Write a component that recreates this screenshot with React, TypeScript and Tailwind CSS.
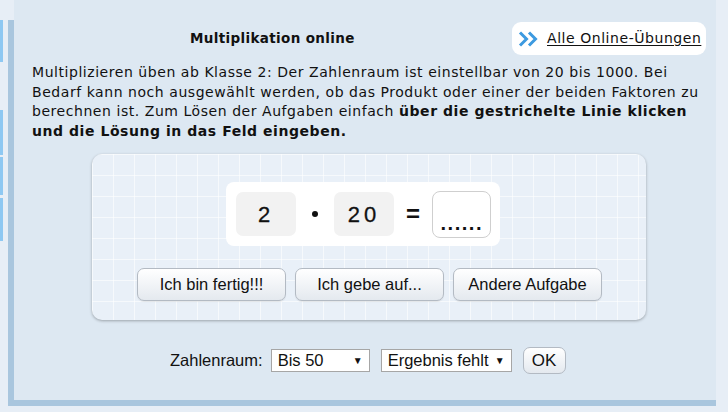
const grid =
  'bg-[linear-gradient(rgba(255,255,255,0.6)_1px,transparent_1px),linear-gradient(90deg,rgba(255,255,255,0.6)_1px,transparent_1px)] bg-[size:21px_21px]';

function Chevrons() {
  return (
    <svg width="22" height="18" viewBox="0 0 22 18" fill="none">
      <path d="M2 2.5 L8.5 9 L2 15.5" stroke="#3d9ae0" strokeWidth="3" strokeLinejoin="miter" />
      <path d="M11 2.5 L17.5 9 L11 15.5" stroke="#3d9ae0" strokeWidth="3" strokeLinejoin="miter" />
    </svg>
  );
}

function NumBox({ value }: { value: string }) {
  return (
    <div className="w-[60px] h-[44px] rounded-[7px] bg-[#f2f2f2] flex items-center justify-center text-[22px] tracking-[4px] text-[#111] font-['Liberation_Sans',Arial,sans-serif] [-webkit-text-stroke:0.3px_#111]">
      {value}
    </div>
  );
}

function Btn({ label, w }: { label: string; w: string }) {
  return (
    <button
      className={`${w} h-[33px] rounded-[7px] border border-[#b3bac3] bg-gradient-to-b from-white to-[#e4e9ef] text-[16.5px] text-[#111] font-['Liberation_Sans',Arial,sans-serif] shadow-[0_1px_1px_rgba(0,0,0,0.08)]`}
    >
      {label}
    </button>
  );
}

function FakeSelect({ label, w }: { label: string; w: string }) {
  return (
    <div
      className={`${w} h-[23px] bg-white border border-[#a6a6a6] flex items-center justify-between pl-[6px] pr-[6px] text-[16.5px] text-[#111]`}
    >
      <span>{label}</span>
      <span className="text-[10px]">▼</span>
    </div>
  );
}

export default function App() {
  return (
    <div className="w-[728px] h-[412px] overflow-hidden bg-[#e7eef6] flex flex-col font-['DejaVu_Sans',Verdana,sans-serif] text-[#111]">
      <div className="flex flex-row h-[400px]">
        {/* side tabs */}
        <div className="w-[8px] flex flex-col">
          <div className="mt-[20px] h-[42px] w-[3px] bg-[#8ec8f2]" />
          <div className="mt-[48px] h-[45px] w-[3px] bg-[#8ec8f2]" />
          <div className="mt-[2px] h-[38px] w-[3px] bg-[#8ec8f2]" />
          <div className="mt-[3px] h-[43px] w-[3px] bg-[#8ec8f2]" />
        </div>
        <div className="w-[6px] mt-[20px] bg-[#a9c6de]" />

        {/* content */}
        <div className="w-[702px] h-[400px] bg-[#dde8f2] flex flex-col">
          <div className="flex items-center mt-[22px] h-[33px]">
            <h1 className="ml-[176px] text-[13.5px] font-bold tracking-[0.35px]">Multiplikation online</h1>
            <a className="ml-auto mr-[10px] w-[194px] h-[33px] rounded-[9px] bg-white flex items-center gap-[7px] pl-[6px] text-[14px] tracking-[0.55px] underline underline-offset-2 text-[#111]">
              <Chevrons />
              <span>Alle Online-Übungen</span>
            </a>
          </div>

          <p className="ml-[18px] mt-[8px] w-[690px] text-[14px] leading-[19.5px] tracking-[0.55px] whitespace-nowrap">
            Multiplizieren üben ab Klasse 2: Der Zahlenraum ist einstellbar von 20 bis 1000. Bei
            <br />
            Bedarf kann noch ausgewählt werden, ob das Produkt oder einer der beiden Faktoren zu
            <br />
            berechnen ist. Zum Lösen der Aufgaben einfach <b>über die gestrichelte Linie klicken</b>
            <br />
            <b>und die Lösung in das Feld eingeben.</b>
          </p>

          <div
            className={`ml-[78px] mt-[13px] w-[554px] h-[166px] rounded-[10px] bg-[#e9f0f8] ${grid} shadow-[0_1px_3px_rgba(0,0,0,0.3)] flex flex-col`}
          >
            <div className="ml-[134px] mt-[28px] w-[274px] h-[64px] rounded-[8px] bg-white flex items-center pl-[10px]">
              <NumBox value="2" />
              <div className="w-[38px] flex justify-center">
                <span className="w-[6px] h-[6px] rounded-full bg-[#111]" />
              </div>
              <NumBox value="20" />
              <div className="w-[38px] flex justify-center text-[24px] font-bold font-['Liberation_Sans',Arial,sans-serif]">
                =
              </div>
              <div className="w-[59px] h-[47px] rounded-[8px] border-[1.5px] border-[#cfcfcf] bg-white flex items-end justify-center pb-[4px]">
                <span className="text-[16px] font-bold leading-none tracking-[1px]">......</span>
              </div>
            </div>
            <div className="ml-[45px] mt-[22px] flex gap-[9px]">
              <Btn label="Ich bin fertig!!!" w="w-[149px]" />
              <Btn label="Ich gebe auf..." w="w-[149px]" />
              <Btn label="Andere Aufgabe" w="w-[149px]" />
            </div>
          </div>

          <div className="ml-[156px] mt-[27px] flex items-center font-['Liberation_Sans',Arial,sans-serif] text-[16.5px]">
            <span className="mr-[8px]">Zahlenraum:</span>
            <FakeSelect label="Bis 50" w="w-[99px]" />
            <div className="w-[11px]" />
            <FakeSelect label="Ergebnis fehlt" w="w-[131px]" />
            <div className="w-[11px]" />
            <button className="w-[43px] h-[27px] rounded-[7px] border border-[#b3bac3] bg-gradient-to-b from-white to-[#e4e9ef] text-[17px] text-[#111]">
              OK
            </button>
          </div>
        </div>
      </div>
      <div className="ml-[8px] w-[708px] h-[6px] bg-[#a9c6de]" />
    </div>
  );
}
